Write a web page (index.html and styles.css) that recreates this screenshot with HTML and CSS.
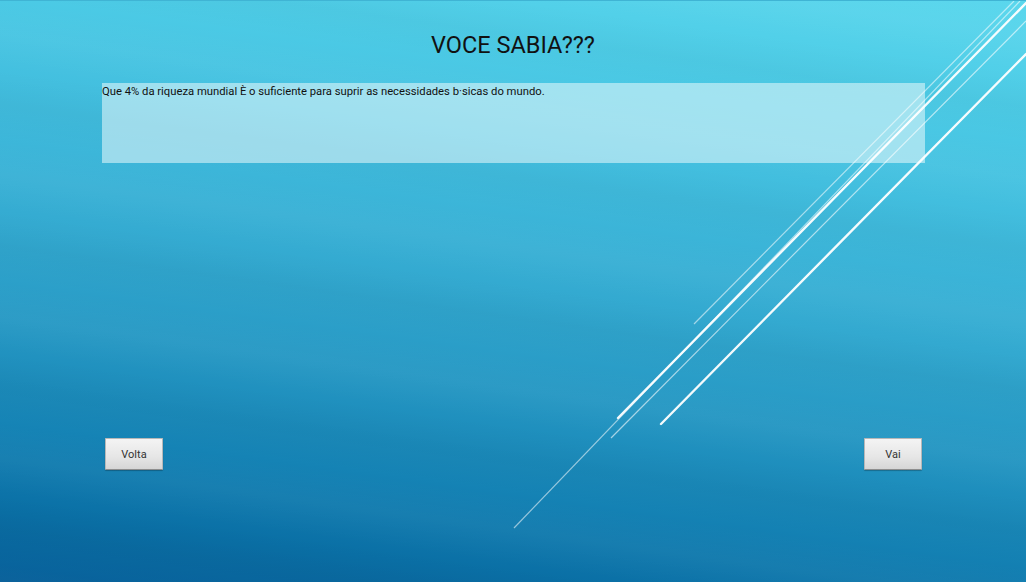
FILE: index.html
```html
<!DOCTYPE html>
<html lang="pt">
<head>
<meta charset="utf-8">
<title>Voce Sabia</title>
<link rel="stylesheet" href="styles.css">
</head>
<body>
<div class="screen">
  <svg class="streaks" width="1026" height="582" viewBox="0 0 1026 582">
    <line x1="514" y1="527" x2="1020" y2="0" stroke="#ffffff" stroke-opacity="0.55" stroke-width="1.2"/>
    <line x1="694" y1="323" x2="1014" y2="0" stroke="#ffffff" stroke-opacity="0.55" stroke-width="1.2"/>
    <line x1="611" y1="437" x2="1026" y2="20" stroke="#ffffff" stroke-opacity="0.6" stroke-width="1.2"/>
    <line x1="618" y1="417" x2="1026" y2="2" stroke="#ffffff" stroke-opacity="0.95" stroke-width="2.4" stroke-linecap="round"/>
    <line x1="661" y1="423" x2="1026" y2="53" stroke="#ffffff" stroke-opacity="0.95" stroke-width="2.4" stroke-linecap="round"/>
  </svg>
  <h1 class="title">VOCE SABIA???</h1>
  <div class="factbox">
    <p class="fact">Que 4% da riqueza mundial È o suficiente para suprir as necessidades b·sicas do mundo.</p>
  </div>
  <div class="nav">
    <button class="btn">Volta</button>
    <button class="btn">Vai</button>
  </div>
</div>
</body>
</html>
```

FILE: styles.css
```css
html, body {
  margin: 0;
  padding: 0;
}
body {
  width: 1026px;
  height: 582px;
  overflow: hidden;
  font-family: Roboto, "Noto Sans", sans-serif;
}
.screen {
  position: relative;
  width: 1026px;
  height: 582px;
  box-sizing: border-box;
  border-top: 1px solid #3fb4d4;
  display: flex;
  flex-direction: column;
  background:
    repeating-linear-gradient(188deg, rgba(255,255,255,0.00) 0px, rgba(255,255,255,0.03) 35px, rgba(255,255,255,0.00) 70px, rgba(0,0,0,0.025) 105px, rgba(255,255,255,0.00) 140px),
    linear-gradient(187deg, #5ad7ed 0%, #4ccbe6 16%, #3fbadc 34%, #33a9d0 50%, #2597c3 64%, #1583b5 78%, #0a6fa5 90%, #08609a 100%);
}
.streaks {
  position: absolute;
  left: 0;
  top: 0;
  z-index: 2;
  pointer-events: none;
}
.title {
  margin: 30px 0 0 0;
  text-align: center;
  font-weight: 400;
  font-size: 23.5px;
  color: #111;
  line-height: 28px;
}
.factbox {
  margin: 24px 0 0 102px;
  width: 823px;
  height: 80px;
  box-sizing: border-box;
  padding-top: 2px;
  background: rgba(235, 250, 252, 0.55);
}
.fact {
  margin: 0;
  font-size: 11.25px;
  line-height: 13px;
  color: #111;
}
.nav {
  margin-top: 275px;
  padding: 0 104px 0 105px;
  display: flex;
  justify-content: space-between;
}
.btn {
  width: 58px;
  height: 32px;
  padding: 0;
  border: 1px solid #b8b8b8;
  border-bottom-color: #8e8e8e;
  border-radius: 1px;
  background: linear-gradient(180deg, #f4f4f4 0%, #e6e6e6 60%, #d6d6d6 100%);
  box-shadow: 0 1px 1px rgba(0,0,0,0.25);
  font-family: Roboto, "Noto Sans", sans-serif;
  font-size: 11px;
  color: #333;
}
```
